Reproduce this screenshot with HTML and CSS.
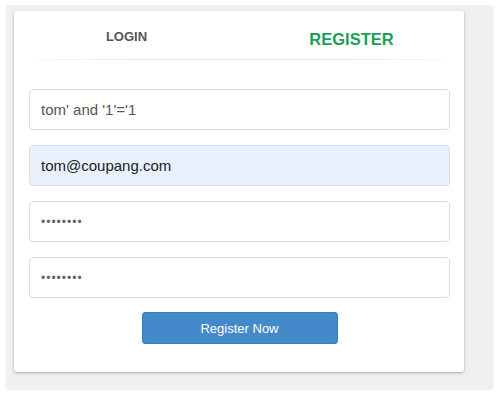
FILE: index.html
```html
<!DOCTYPE html>
<html lang="en">
  <head>
    <meta charset="UTF-8" />
    <meta name="viewport" content="width=device-width, initial-scale=1.0" />
    <title>Register</title>
    <link rel="stylesheet" href="styles.css">
  </head>
  <body>
    <div class="panel">
      <div class="card">
        <nav class="tabs">
          <a href="#" class="tab">LOGIN</a>
          <a href="#" class="tab active">REGISTER</a>
        </nav>
        <hr class="divider" />
        <form class="form">
          <input class="field" type="text" value="tom' and '1'='1" />
          <input class="field autofill" type="email" value="tom@coupang.com" />
          <input class="field" type="password" value="password" />
          <input class="field" type="password" value="password" />
          <button type="button" class="knap">Register Now</button>
        </form>
      </div>
    </div>
  </body>
</html>
```

FILE: styles.css
```css
body {
  margin: 0;
  padding: 0;
  background: #ffffff;
  font-family: "Liberation Sans", Arial, sans-serif;
}

.panel {
  margin: 5px 7px 6px 6px;
  padding: 6px 29px 17px 8px;
  background: #f0f0f0;
  border-radius: 2px;
  box-shadow: 0 1px 2px rgba(0, 0, 0, 0.08);
}

.card {
  background: #ffffff;
  border-radius: 3px;
  box-shadow: 0 1px 3px rgba(0, 0, 0, 0.3);
  padding: 0 14px 28px 15px;
}

.tabs {
  display: grid;
  grid-template-columns: 1fr 1fr;
  height: 48px;
  margin: 0 -14px 0 -15px;
}

.tab {
  text-decoration: none;
  text-align: center;
  font-weight: bold;
}
.tab:first-child {
  color: #555555;
  font-size: 13px;
  padding-top: 18px;
}
.tab.active {
  color: #1a9f5a;
  font-size: 16.5px;
  padding-top: 19px;
}

.divider {
  border: 0;
  height: 1px;
  margin: 0 6px 29px 8px;
  background: linear-gradient(90deg, rgba(230, 230, 230, 0.3), #e6e6e6 30%, #e6e6e6 70%, rgba(230, 230, 230, 0.3));
}

.form {
  display: flex;
  flex-direction: column;
  align-items: center;
  gap: 15px;
}

.field {
  box-sizing: border-box;
  width: 100%;
  height: 41px;
  margin: 0;
  padding: 0 11px;
  border: 1px solid #dddddd;
  border-radius: 4px;
  background: #ffffff;
  color: #555555;
  font-family: "Liberation Sans", Arial, sans-serif;
  font-size: 15px;
  outline: none;
}
.field.autofill {
  background: #e8f0fe;
  color: #222222;
}
.field[type="password"] {
  color: #666666;
  font-size: 12px;
  letter-spacing: 1px;
}

.knap {
  width: 196px;
  height: 32px;
  margin-top: -1px;
  border: 1px solid #3c7fc0;
  border-radius: 3px;
  background: #4489ca;
  color: #ffffff;
  font-family: "Liberation Sans", Arial, sans-serif;
  font-size: 13px;
  cursor: pointer;
}
```
